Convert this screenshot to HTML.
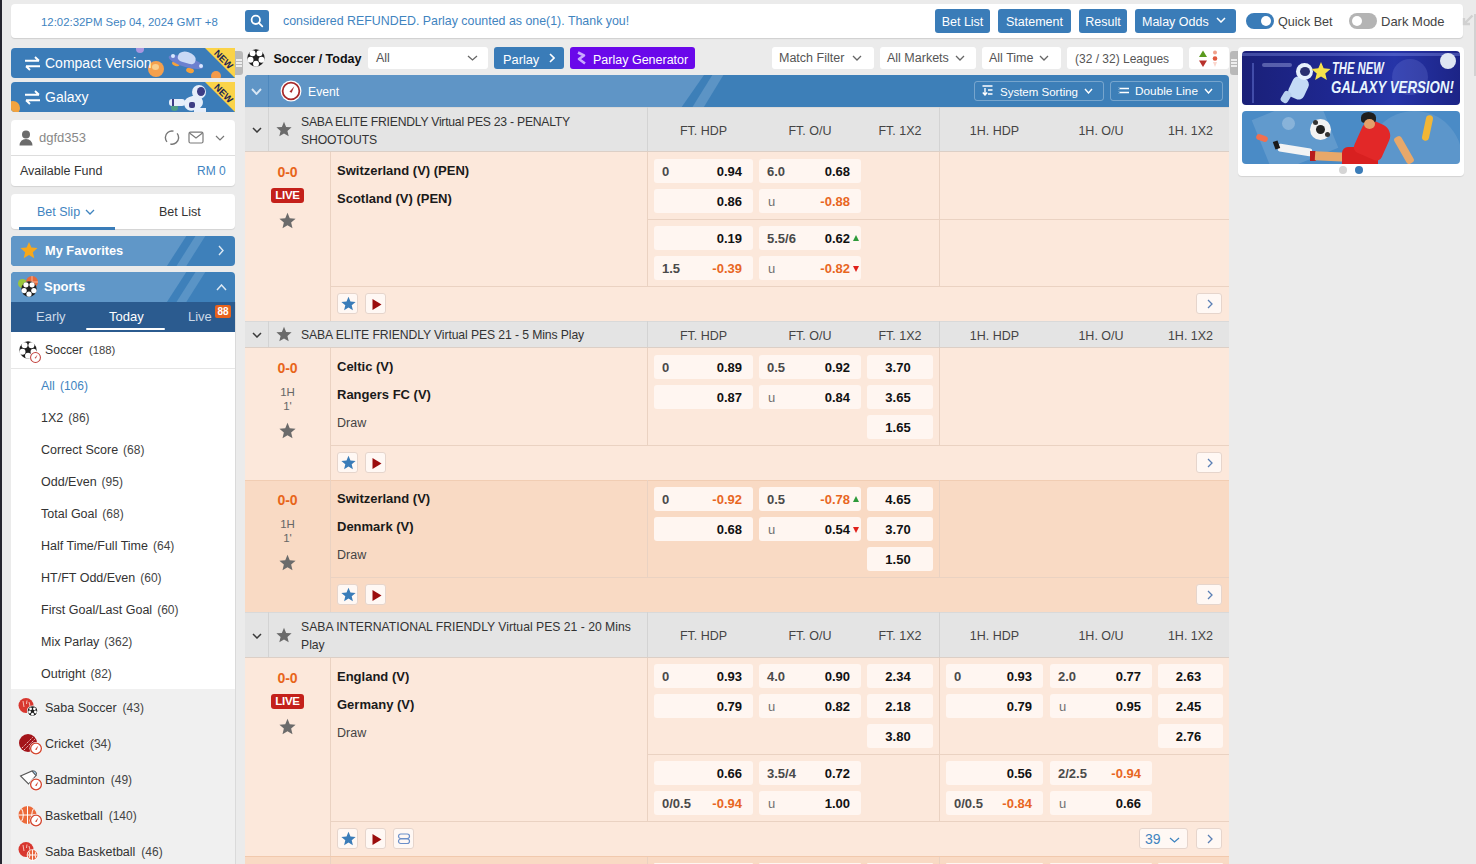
<!DOCTYPE html><html><head><meta charset="utf-8"><style>
*{margin:0;padding:0;box-sizing:border-box}
html,body{width:1476px;height:864px;overflow:hidden;background:#ebebeb;font-family:"Liberation Sans",sans-serif;color:#333}
div,span,svg{position:absolute}
.t{white-space:nowrap;line-height:16px;font-size:13px}
.in{position:static}
.btn{background:#3a7cb8;border-radius:3px;color:#fff;font-size:13px;line-height:27px;text-align:center}
.wh{background:#fff;border-radius:4px}
.ob{background:#fff6f1;border-radius:3px;height:24px}
.ob .h{left:8px;top:4.5px;font-size:13px;line-height:16px;color:#4a4a4a;font-weight:bold;white-space:nowrap}
.ob .u{left:9px;top:4.5px;font-size:13px;line-height:16px;color:#707070;white-space:nowrap}
.ob .o{right:11px;top:4.5px;font-size:13px;line-height:16px;font-weight:bold;color:#111;white-space:nowrap}
.ob .c{left:0;right:4px;top:4.5px;font-size:13px;line-height:16px;font-weight:bold;color:#111;text-align:center}
.ob .n{color:#e8661f}
.lg{background:#e4e4e4}
.colh{font-size:12.5px;color:#444;line-height:16px;white-space:nowrap;text-align:center}
.fb{background:#fff8f4;border:1px solid #e6d5cc;border-radius:3px;width:21px;height:21px}
</style></head><body><div style="left:0;top:0;width:2px;height:864px;background:#25252f"></div>
<div style="left:11px;top:4px;width:1452px;height:34px;background:#fff;border-radius:4px;box-shadow:0 1px 1px rgba(0,0,0,.12)"></div>
<div class="t" style="left:41px;top:14px;font-size:11.4px;color:#3f84bf;line-height:16px">12:02:32PM Sep 04, 2024 GMT +8</div>
<div style="left:245px;top:10px;width:24px;height:22px;background:#3a7cb8;border-radius:3px"><svg style="left:5px;top:4px" width="14" height="14" viewBox="0 0 14 14"><circle cx="5.8" cy="5.8" r="4.2" fill="none" stroke="#fff" stroke-width="1.8"/><path d="M8.8 8.8 L12.3 12.3" stroke="#fff" stroke-width="1.8" stroke-linecap="round"/></svg></div>
<div class="t" style="left:283px;top:13px;font-size:12.4px;color:#3f84bf">considered REFUNDED. Parlay counted as one(1). Thank you!</div>
<div class="btn" style="left:935px;top:9px;width:55px;height:24px;font-size:12.5px;line-height:27px">Bet List</div>
<div class="btn" style="left:998px;top:9px;width:73px;height:24px;font-size:12.5px;line-height:27px">Statement</div>
<div class="btn" style="left:1079px;top:9px;width:48px;height:24px;font-size:12.5px;line-height:27px">Result</div>
<div class="btn" style="left:1135px;top:9px;width:101px;height:24px;font-size:12.5px;line-height:27px;text-align:left;padding-left:7px"><span class="in">Malay Odds</span></div>
<svg style="left:1216px;top:17px" width="10" height="6" viewBox="0 0 10 6"><path d="M1 1 L5.0 5 L9 1" fill="none" stroke="#fff" stroke-width="1.5"/></svg>
<div style="left:1246px;top:13px;width:28px;height:16px;background:#3a7cb8;border-radius:8px"><div style="left:15px;top:3px;width:10px;height:10px;border-radius:5px;background:#fff"></div></div>
<div class="t" style="left:1278px;top:14px;font-size:12.6px;color:#444">Quick Bet</div>
<div style="left:1349px;top:13px;width:28px;height:16px;background:#b4b4b4;border-radius:8px"><div style="left:3px;top:3px;width:10px;height:10px;border-radius:5px;background:#fff"></div></div>
<div class="t" style="left:1381px;top:14px;font-size:13px;color:#444">Dark Mode</div>
<svg style="left:1462px;top:14px" width="12" height="12" viewBox="0 0 12 12"><path d="M10.5 1.5 L2.5 9.5 M2 4 L2 10 L8 10" fill="none" stroke="#d0d0d0" stroke-width="2.4"/></svg>
<div style="left:1474px;top:14px;width:2px;height:62px;background:#d2d2d2"></div>
<div style="left:11px;top:48px;width:224px;height:30px;background:#3b7cb8;border-radius:4px 0 0 4px;overflow:hidden"><svg style="left:13px;top:8px" width="17" height="15" viewBox="0 0 17 15"><path d="M1 4.8 H15 M11 1 L15 4.8 M16 10.2 H2 M6 14 L2 10.2" fill="none" stroke="#fff" stroke-width="1.9"/></svg><div style="left:125px;top:-3px;width:8px;height:8px;border-radius:50%;background:#a996e0"></div><div style="left:137px;top:13px;width:16px;height:16px;border-radius:50%;background:#f5a04d"></div><div style="left:141px;top:16px;width:7px;height:6px;border-radius:50%;background:#f9cf8f"></div><div style="left:161px;top:13px;width:8px;height:5px;border-radius:50%;background:#f7a23a;transform:rotate(15deg)"></div><div style="left:175px;top:20px;width:8px;height:5px;border-radius:50%;background:#f7a23a;transform:rotate(15deg)"></div><div style="left:157px;top:9px;width:36px;height:10px;border-radius:50%;background:#6b80cf;transform:rotate(17deg)"></div><div style="left:167px;top:4px;width:18px;height:11px;border-radius:50% 50% 30% 30%;background:#cad9f5;transform:rotate(17deg)"></div><div style="left:160px;top:6px;width:4px;height:4px;border-radius:50%;background:#d8e8ff"></div><div style="left:188px;top:16px;width:4px;height:4px;border-radius:50%;background:#d8e8ff"></div><div style="left:200px;top:23px;width:10px;height:10px;border-radius:50%;background:#f39a4a"></div><div class="t" style="left:34px;top:7px;font-size:14px;color:#fff">Compact Version</div><svg style="left:194px;top:0" width="30" height="30" viewBox="0 0 30 30"><polygon points="0,0 30,0 30,30" fill="#fbd348"/><text x="18.8" y="11.2" transform="rotate(45 18.8 11.2)" text-anchor="middle" dominant-baseline="central" font-family="Liberation Sans" font-weight="bold" font-size="9.5" fill="#1d2552">NEW</text></svg></div>
<div style="left:11px;top:82px;width:224px;height:30px;background:#3b7cb8;border-radius:4px 0 0 4px;overflow:hidden"><svg style="left:13px;top:8px" width="17" height="15" viewBox="0 0 17 15"><path d="M1 4.8 H15 M11 1 L15 4.8 M16 10.2 H2 M6 14 L2 10.2" fill="none" stroke="#fff" stroke-width="1.9"/></svg><div style="left:-5px;top:19px;width:14px;height:14px;border-radius:50%;background:#f2a33f"></div><div style="left:160px;top:22px;width:7px;height:7px;border-radius:50%;background:#4f9f86"></div><div style="left:173px;top:14px;width:19px;height:14px;border-radius:7px;background:#e6eefa;transform:rotate(-15deg)"></div><div style="left:158px;top:17px;width:16px;height:7px;border-radius:3px;background:#e6eefa"></div><div style="left:161px;top:17px;width:2px;height:7px;background:#3d3d85"></div><div style="left:181px;top:3px;width:14px;height:14px;border-radius:50%;background:#e6eefa"></div><div style="left:186px;top:5px;width:8px;height:9px;border-radius:50%;background:#3d3d85"></div><div style="left:178px;top:20px;width:6px;height:6px;border-radius:2px;background:#3d3d85"></div><div style="left:183px;top:26px;width:12px;height:6px;background:#e6eefa"></div><div class="t" style="left:34px;top:7px;font-size:14px;color:#fff">Galaxy</div><svg style="left:194px;top:0" width="30" height="30" viewBox="0 0 30 30"><polygon points="0,0 30,0 30,30" fill="#fbd348"/><text x="18.8" y="11.2" transform="rotate(45 18.8 11.2)" text-anchor="middle" dominant-baseline="central" font-family="Liberation Sans" font-weight="bold" font-size="9.5" fill="#1d2552">NEW</text></svg></div>
<div style="left:235px;top:51px;width:8px;height:24px;background:#b9b9b9;border-radius:0 3px 3px 0"><div style="left:1px;top:8px;width:6px;height:1.5px;background:#eee"></div><div style="left:1px;top:11px;width:6px;height:1.5px;background:#eee"></div><div style="left:1px;top:14px;width:6px;height:1.5px;background:#eee"></div></div>
<div style="left:11px;top:120px;width:224px;height:66px;background:#fff;border-radius:4px;box-shadow:0 1px 1px rgba(0,0,0,.1)"></div>
<svg style="left:19px;top:130px" width="14" height="16" viewBox="0 0 14 16"><circle cx="7" cy="4.5" r="4" fill="#6b6b6b"/><path d="M0.5 15.5 Q1 9 7 9 Q13 9 13.5 15.5 Z" fill="#6b6b6b"/></svg>
<div class="t" style="left:39px;top:130px;font-size:13px;color:#888">dgfd353</div>
<svg style="left:164px;top:130px" width="16" height="16" viewBox="0 0 16 16"><circle cx="8" cy="7.6" r="6.6" fill="none" stroke="#777" stroke-width="1.4" stroke-dasharray="16.4 4.3" transform="rotate(-220 8 7.6)"/></svg>
<svg style="left:188px;top:131px" width="16" height="13" viewBox="0 0 16 13"><rect x="1" y="1.2" width="14" height="10.8" rx="1.5" fill="none" stroke="#7a7a7a" stroke-width="1.2"/><path d="M1.5 2 L8 7 L14.5 2" fill="none" stroke="#7a7a7a" stroke-width="1.2"/></svg>
<svg style="left:215px;top:135px" width="10" height="6" viewBox="0 0 10 6"><path d="M1 1 L5.0 5 L9 1" fill="none" stroke="#777" stroke-width="1.2"/></svg>
<div style="left:11px;top:155px;width:224px;height:1px;background:#ddd"></div>
<div class="t" style="left:20px;top:163px;font-size:12.5px;color:#333">Available Fund</div>
<div class="t" style="left:197px;top:163px;font-size:12px;color:#3f84bf">RM 0</div>
<div style="left:11px;top:194px;width:224px;height:35px;background:#fff;border-radius:4px;box-shadow:0 1px 1px rgba(0,0,0,.1)"></div>
<div class="t" style="left:37px;top:204px;font-size:12.5px;color:#3f84bf">Bet Slip</div>
<svg style="left:85px;top:209px" width="10" height="6" viewBox="0 0 10 6"><path d="M1 1 L5.0 5 L9 1" fill="none" stroke="#3f84bf" stroke-width="1.3"/></svg>
<div class="t" style="left:159px;top:204px;font-size:12.5px;color:#333">Bet List</div>
<div style="left:19px;top:227px;width:96px;height:3px;background:#3a7cb8"></div>
<div style="left:11px;top:236px;width:224px;height:30px;border-radius:4px;overflow:hidden;background:#3e80ba"><svg style="left:0;top:0" width="224" height="30" viewBox="0 0 224 30"><polygon points="0,0 175.3,0 155.9,30 0,30" fill="#6097c8"/><polygon points="184.5,0 194.3,0 175.3,30 165.5,30" fill="#5a94c6"/></svg></div>
<svg style="left:20px;top:241px" width="18" height="18" viewBox="0 0 18 18"><polygon points="9.00,0.90 11.38,6.62 17.56,7.12 12.85,11.15 14.29,17.18 9.00,13.95 3.71,17.18 5.15,11.15 0.44,7.12 6.62,6.62" fill="#f7a81b"/></svg>
<div class="t" style="left:45px;top:243px;font-size:12.8px;font-weight:bold;color:#fff">My Favorites</div>
<svg style="left:218px;top:245px" width="6" height="11" viewBox="0 0 6 11"><path d="M1 1 L5 5.5 L1 10" fill="none" stroke="#dce8f3" stroke-width="1.4"/></svg>
<div style="left:11px;top:272px;width:224px;height:30px;border-radius:4px 4px 0 0;overflow:hidden;background:#3e80ba"><svg style="left:0;top:0" width="224" height="30" viewBox="0 0 224 30"><polygon points="0,0 175.3,0 155.9,30 0,30" fill="#6097c8"/><polygon points="184.5,0 194.3,0 175.3,30 165.5,30" fill="#5a94c6"/></svg></div>
<div style="left:18px;top:279px;width:9px;height:9px;border-radius:50%;background:#9bc53d"></div>
<svg style="left:26px;top:276px" width="12" height="12" viewBox="0 0 12 12"><circle cx="6" cy="6" r="6" fill="#e66a3b"/><path d="M0 6 H12 M6 0 V12" stroke="#f7c0a8" stroke-width="0.9"/></svg>
<svg style="left:21px;top:281px" width="16" height="16" viewBox="0 0 20 20"><circle cx="10" cy="10" r="9.6" fill="#1f1f1f"/><circle cx="6.2" cy="4.8" r="3.3" fill="#fff"/><circle cx="13.8" cy="4.8" r="3.3" fill="#fff"/><circle cx="16.1" cy="11.9" r="3.3" fill="#fff"/><circle cx="3.9" cy="11.9" r="3.3" fill="#fff"/><circle cx="10" cy="16.3" r="3.3" fill="#fff"/></svg>
<div class="t" style="left:44px;top:279px;font-size:13px;font-weight:bold;color:#fff">Sports</div>
<svg style="left:216px;top:284px" width="11" height="7" viewBox="0 0 11 7"><path d="M1 6 L5.5 1 L10 6" fill="none" stroke="#dce8f3" stroke-width="1.5"/></svg>
<div style="left:11px;top:302px;width:224px;height:30px;background:#2b5b8f"></div>
<div class="t" style="left:36px;top:309px;font-size:13px;color:#cbd9e8">Early</div>
<div class="t" style="left:109px;top:309px;font-size:13px;color:#fff">Today</div>
<div style="left:86px;top:328px;width:79px;height:2px;background:#fff;border-radius:1px"></div>
<div class="t" style="left:188px;top:309px;font-size:13px;color:#cbd9e8">Live</div>
<div style="left:215px;top:305px;width:16px;height:13px;background:#e8621c;border-radius:2px"><div class="t" style="left:0;width:16px;top:0;line-height:13px;font-size:10px;font-weight:bold;color:#fff;text-align:center">88</div></div>
<div style="left:11px;top:332px;width:224px;height:357px;background:#fff"></div>
<svg style="left:19px;top:341px" width="18" height="18" viewBox="0 0 20 20"><circle cx="10" cy="10" r="9.6" fill="#1f1f1f"/><circle cx="6.2" cy="4.8" r="3.3" fill="#fff"/><circle cx="13.8" cy="4.8" r="3.3" fill="#fff"/><circle cx="16.1" cy="11.9" r="3.3" fill="#fff"/><circle cx="3.9" cy="11.9" r="3.3" fill="#fff"/><circle cx="10" cy="16.3" r="3.3" fill="#fff"/></svg>
<svg style="left:29px;top:351px" width="13" height="13" viewBox="0 0 20 20"><circle cx="10" cy="10" r="9.5" fill="#fff"/><circle cx="10" cy="10" r="7.6" fill="none" stroke="#c2413c" stroke-width="1.6"/><path d="M8.6 10.6 L13 5.6 L10.6 11.6 Z" fill="#c2413c"/></svg>
<div class="t" style="left:45px;top:342px;font-size:12.2px;color:#333">Soccer</div><div class="t" style="left:89px;top:342px;font-size:11.3px;color:#444">(188)</div>
<div style="left:11px;top:368px;width:224px;height:1px;background:#e6e6e6"></div>
<div class="t" style="left:41px;top:377.67px;font-size:12.5px;line-height:16px;color:#3f84bf"><span class="in">All</span><span class="in" style="margin-left:5px;font-size:12px;color:#3f84bf">(106)</span></div>
<div class="t" style="left:41px;top:409.67px;font-size:12.5px;line-height:16px;color:#333"><span class="in">1X2</span><span class="in" style="margin-left:5px;font-size:12px;color:#444">(86)</span></div>
<div class="t" style="left:41px;top:441.67px;font-size:12.5px;line-height:16px;color:#333"><span class="in">Correct Score</span><span class="in" style="margin-left:5px;font-size:12px;color:#444">(68)</span></div>
<div class="t" style="left:41px;top:473.67px;font-size:12.5px;line-height:16px;color:#333"><span class="in">Odd/Even</span><span class="in" style="margin-left:5px;font-size:12px;color:#444">(95)</span></div>
<div class="t" style="left:41px;top:505.67px;font-size:12.5px;line-height:16px;color:#333"><span class="in">Total Goal</span><span class="in" style="margin-left:5px;font-size:12px;color:#444">(68)</span></div>
<div class="t" style="left:41px;top:537.67px;font-size:12.5px;line-height:16px;color:#333"><span class="in">Half Time/Full Time</span><span class="in" style="margin-left:5px;font-size:12px;color:#444">(64)</span></div>
<div class="t" style="left:41px;top:569.67px;font-size:12.5px;line-height:16px;color:#333"><span class="in">HT/FT Odd/Even</span><span class="in" style="margin-left:5px;font-size:12px;color:#444">(60)</span></div>
<div class="t" style="left:41px;top:601.67px;font-size:12.5px;line-height:16px;color:#333"><span class="in">First Goal/Last Goal</span><span class="in" style="margin-left:5px;font-size:12px;color:#444">(60)</span></div>
<div class="t" style="left:41px;top:633.67px;font-size:12.5px;line-height:16px;color:#333"><span class="in">Mix Parlay</span><span class="in" style="margin-left:5px;font-size:12px;color:#444">(362)</span></div>
<div class="t" style="left:41px;top:665.67px;font-size:12.5px;line-height:16px;color:#333"><span class="in">Outright</span><span class="in" style="margin-left:5px;font-size:12px;color:#444">(82)</span></div>
<div style="left:11px;top:689px;width:224px;height:175px;background:#f0f0f0"></div>
<svg style="left:18px;top:698px" width="22" height="20" viewBox="0 0 22 20"><circle cx="8" cy="7.5" r="7.5" fill="#d8372f"/><path d="M5 3 L6 9 M9 2.5 L8.5 6 M11 4 L12 8" stroke="#f4c0b8" stroke-width="1"/><circle cx="14.5" cy="13" r="5.6" fill="#fff"/><circle cx="14.5" cy="13" r="4.8" fill="#1f1f1f"/><circle cx="12.6" cy="10.8" r="1.4" fill="#fff"/><circle cx="16.4" cy="10.8" r="1.4" fill="#fff"/><circle cx="17.4" cy="14" r="1.4" fill="#fff"/><circle cx="11.6" cy="14" r="1.4" fill="#fff"/><circle cx="14.5" cy="16.2" r="1.4" fill="#fff"/></svg>
<div class="t" style="left:45px;top:699.67px;font-size:12.5px;line-height:16px;color:#333"><span class="in">Saba Soccer</span><span class="in" style="margin-left:6px;font-size:12px;color:#444">(43)</span></div>
<svg style="left:18px;top:733px" width="26" height="22" viewBox="0 0 26 22"><circle cx="10" cy="10" r="9" fill="#a3141a"/><path d="M4 15 L15 4 M6 17 L17 6" stroke="#f3d0d0" stroke-width="1" stroke-dasharray="1.3 1"/><circle cx="18" cy="15.5" r="6.5" fill="#fff"/><circle cx="18" cy="15.5" r="5.4" fill="none" stroke="#d2452e" stroke-width="1.3"/><path d="M17 16.4 L20.4 12.6 L18.6 17 Z" fill="#d2452e"/></svg>
<div class="t" style="left:45px;top:735.67px;font-size:12.5px;line-height:16px;color:#333"><span class="in">Cricket</span><span class="in" style="margin-left:6px;font-size:12px;color:#444">(34)</span></div>
<svg style="left:18px;top:769px" width="26" height="22" viewBox="0 0 26 22"><path d="M2.5 7 L14 2 L18 6.5 L10.5 15 Z" fill="#fff" stroke="#555" stroke-width="1.1"/><path d="M14 2 Q17 1 18.5 4 L18 6.5 Z" fill="#9cc8ea" stroke="#555" stroke-width="1"/><circle cx="18" cy="15.5" r="6.5" fill="#fff"/><circle cx="18" cy="15.5" r="5.4" fill="none" stroke="#d2452e" stroke-width="1.3"/><path d="M17 16.4 L20.4 12.6 L18.6 17 Z" fill="#d2452e"/></svg>
<div class="t" style="left:45px;top:771.67px;font-size:12.5px;line-height:16px;color:#333"><span class="in">Badminton</span><span class="in" style="margin-left:6px;font-size:12px;color:#444">(49)</span></div>
<svg style="left:18px;top:805px" width="26" height="22" viewBox="0 0 26 22"><circle cx="9.5" cy="10" r="9" fill="#ec6a3a"/><path d="M0.5 10 H18.5 M9.5 1 V19 M3.5 3.5 Q7 10 3.5 16.5 M15.5 3.5 Q12 10 15.5 16.5" stroke="#fff" stroke-width="1" fill="none"/><circle cx="18" cy="15.5" r="6.5" fill="#fff"/><circle cx="18" cy="15.5" r="5.4" fill="none" stroke="#d2452e" stroke-width="1.3"/><path d="M17 16.4 L20.4 12.6 L18.6 17 Z" fill="#d2452e"/></svg>
<div class="t" style="left:45px;top:807.67px;font-size:12.5px;line-height:16px;color:#333"><span class="in">Basketball</span><span class="in" style="margin-left:6px;font-size:12px;color:#444">(140)</span></div>
<svg style="left:18px;top:842px" width="22" height="20" viewBox="0 0 22 20"><circle cx="8" cy="7.5" r="7.5" fill="#d8372f"/><path d="M5 3 L6 9 M9 2.5 L8.5 6 M11 4 L12 8" stroke="#f4c0b8" stroke-width="1"/><circle cx="14.5" cy="13" r="5.8" fill="#fff"/><circle cx="14.5" cy="13" r="5" fill="#e8643c"/><path d="M9.5 13 H19.5 M14.5 8 V18 M11 9.5 Q13 13 11 16.5 M18 9.5 Q16 13 18 16.5" stroke="#fff" stroke-width="0.9" fill="none"/></svg>
<div class="t" style="left:45px;top:843.67px;font-size:12.5px;line-height:16px;color:#333"><span class="in">Saba Basketball</span><span class="in" style="margin-left:6px;font-size:12px;color:#444">(46)</span></div>
<div style="left:235px;top:302px;width:1px;height:562px;background:#dadada"></div>
<div style="left:1230px;top:51px;width:8px;height:24px;background:#b9b9b9;border-radius:3px 0 0 3px"><div style="left:1px;top:8px;width:6px;height:1.5px;background:#eee"></div><div style="left:1px;top:11px;width:6px;height:1.5px;background:#eee"></div><div style="left:1px;top:14px;width:6px;height:1.5px;background:#eee"></div></div>
<svg style="left:247px;top:49px" width="18" height="18" viewBox="0 0 20 20"><circle cx="10" cy="10" r="9.6" fill="#1f1f1f"/><circle cx="6.2" cy="4.8" r="3.3" fill="#fff"/><circle cx="13.8" cy="4.8" r="3.3" fill="#fff"/><circle cx="16.1" cy="11.9" r="3.3" fill="#fff"/><circle cx="3.9" cy="11.9" r="3.3" fill="#fff"/><circle cx="10" cy="16.3" r="3.3" fill="#fff"/></svg>
<div class="t" style="left:273.5px;top:50.97px;font-size:12.5px;line-height:16px;font-weight:bold;color:#111">Soccer / Today</div>
<div style="left:368px;top:47px;width:120px;height:22px;background:#fff;border-radius:3px"></div>
<div class="t" style="left:376px;top:50.17px;font-size:12.5px;line-height:16px;color:#555">All</div>
<svg style="left:467px;top:55px" width="11" height="6" viewBox="0 0 11 6"><path d="M1 1 L5.5 5 L10 1" fill="none" stroke="#666" stroke-width="1.3"/></svg>
<div style="left:494px;top:47px;width:70px;height:22px;background:#3a7cb8;border-radius:3px"></div>
<div class="t" style="left:503px;top:51.86px;font-size:12.8px;line-height:16px;color:#fff">Parlay</div>
<svg style="left:549px;top:53px" width="6" height="10" viewBox="0 0 6 10"><path d="M1 1 L5 5.0 L1 9" fill="none" stroke="#fff" stroke-width="1.6"/></svg>
<div style="left:570px;top:47px;width:125px;height:22px;background:#6a08ea;border-radius:3px"></div>
<svg style="left:576px;top:51px" width="11" height="14" viewBox="0 0 11 14"><path d="M2 1.5 L8 4.5 L3 8 L9 12.5" fill="none" stroke="#c9a8ff" stroke-width="2.6" stroke-linejoin="round"/></svg>
<div class="t" style="left:593px;top:51.97px;font-size:12.5px;line-height:16px;color:#fff">Parlay Generator</div>
<div style="left:772px;top:47px;width:102px;height:22px;background:#fff;border-radius:3px"></div>
<div class="t" style="left:779px;top:50.17px;font-size:12.5px;line-height:16px;color:#555">Match Filter</div>
<svg style="left:852px;top:55px" width="10" height="6" viewBox="0 0 10 6"><path d="M1 1 L5.0 5 L9 1" fill="none" stroke="#666" stroke-width="1.3"/></svg>
<div style="left:880px;top:47px;width:96px;height:22px;background:#fff;border-radius:3px"></div>
<div class="t" style="left:887px;top:50.17px;font-size:12.5px;line-height:16px;color:#555">All Markets</div>
<svg style="left:955px;top:55px" width="10" height="6" viewBox="0 0 10 6"><path d="M1 1 L5.0 5 L9 1" fill="none" stroke="#666" stroke-width="1.3"/></svg>
<div style="left:982px;top:47px;width:79px;height:22px;background:#fff;border-radius:3px"></div>
<div class="t" style="left:989px;top:50.17px;font-size:12.5px;line-height:16px;color:#555">All Time</div>
<svg style="left:1039px;top:55px" width="10" height="6" viewBox="0 0 10 6"><path d="M1 1 L5.0 5 L9 1" fill="none" stroke="#666" stroke-width="1.3"/></svg>
<div style="left:1067px;top:47px;width:116px;height:22px;background:#fff;border-radius:3px"></div>
<div class="t" style="left:1075px;top:50.84px;font-size:12px;line-height:16px;color:#555">(32 / 32) Leagues</div>
<div style="left:1189px;top:47px;width:40px;height:22px;background:#fff;border-radius:3px"></div>
<svg style="left:1199px;top:50px" width="22" height="18" viewBox="0 0 22 18"><polygon points="4,0.5 8,7 0,7" fill="#5a9a1e"/><polygon points="0,10.5 8,10.5 4,17" fill="#b8322c"/><circle cx="16" cy="2.5" r="2" fill="#f0a08a"/><circle cx="16" cy="8.5" r="2.3" fill="#e0583e"/><polygon points="14,12 18,12 16,17" fill="#fbd6cc"/></svg>
<div style="left:245px;top:75px;width:984px;height:32px;border-radius:4px 4px 0 0;overflow:hidden;background:#3d7fb8"><svg style="left:0;top:0" width="984" height="32" viewBox="0 0 984 32"><polygon points="0,0 459,0 436.7,32 0,32" fill="#5f95c6"/><polygon points="467.3,0 478.4,0 458.9,32 447.5,32" fill="#5c94c5"/></svg></div>
<div style="left:268px;top:75px;width:1px;height:32px;background:#4e88bd"></div>
<svg style="left:251px;top:88px" width="11" height="7" viewBox="0 0 11 7"><path d="M1 1 L5.5 6 L10 1" fill="none" stroke="#d8e6f3" stroke-width="1.9"/></svg>
<svg style="left:280px;top:80px" width="22" height="22" viewBox="0 0 20 20"><circle cx="10" cy="10" r="9.5" fill="#fff"/><circle cx="10" cy="10" r="7.6" fill="none" stroke="#a82a2a" stroke-width="1.6"/><path d="M8.6 10.6 L13 5.6 L10.6 11.6 Z" fill="#a82a2a"/></svg>
<div class="t" style="left:308px;top:83.77px;font-size:12.2px;line-height:16px;color:#fff">Event</div>
<div style="left:974px;top:81px;width:130px;height:20px;border:1px solid rgba(255,255,255,.3);border-radius:3px"></div>
<svg style="left:982px;top:85px" width="11" height="11" viewBox="0 0 11 11"><path d="M0.5 1 H10.5 M3 3 V10 M0.8 7.5 L3 10 L5.2 7.5 M6 5 H10.5 M6 9 H10.5" fill="none" stroke="#fff" stroke-width="1.4"/></svg>
<div class="t" style="left:1000px;top:83.52px;font-size:11.5px;line-height:16px;color:#fff">System Sorting</div>
<svg style="left:1084px;top:88px" width="9" height="6" viewBox="0 0 9 6"><path d="M1 1 L4.5 5 L8 1" fill="none" stroke="#fff" stroke-width="1.4"/></svg>
<div style="left:1110px;top:81px;width:113px;height:20px;border:1px solid rgba(255,255,255,.3);border-radius:3px"></div>
<svg style="left:1118px;top:87px" width="11" height="8" viewBox="0 0 11 8"><path d="M0 1.5 H11 M0 5.5 H11" fill="none" stroke="#fff" stroke-width="1.5"/><path d="M0 1.5 H1.5 M0 5.5 H1.5" stroke="#3d7fb8" stroke-width="1.5"/></svg>
<div class="t" style="left:1135px;top:83.41px;font-size:11.8px;line-height:16px;color:#fff">Double Line</div>
<svg style="left:1204px;top:88px" width="9" height="6" viewBox="0 0 9 6"><path d="M1 1 L4.5 5 L8 1" fill="none" stroke="#fff" stroke-width="1.4"/></svg>
<div style="left:245px;top:107px;width:984px;height:45px;background:#e4e4e4"></div><div style="left:245px;top:107px;width:984px;height:1px;background:#d9d9d9"></div><div style="left:268px;top:107px;width:1px;height:45px;background:#d3d3d3"></div><div style="left:647px;top:107px;width:1px;height:45px;background:#d3d3d3"></div><div style="left:939px;top:107px;width:1px;height:45px;background:#d3d3d3"></div><svg style="left:251.5px;top:127.0px" width="10" height="6" viewBox="0 0 10 6"><path d="M1 1 L5.0 5 L9 1" fill="none" stroke="#3a3a3a" stroke-width="1.5"/></svg><svg style="left:276px;top:121.0px" width="16" height="16" viewBox="0 0 16 16"><polygon points="8.00,0.80 10.12,5.89 15.61,6.33 11.42,9.91 12.70,15.27 8.00,12.40 3.30,15.27 4.58,9.91 0.39,6.33 5.88,5.89" fill="#6b6b6b"/></svg><div style="left:245px;top:151px;width:984px;height:1px;background:#dccfc6"></div><div class="t" style="left:301px;top:113.57px;font-size:12.2px;line-height:16px;color:#333;letter-spacing:-0.24px">SABA ELITE FRIENDLY Virtual PES 23 - PENALTY</div><div class="t" style="left:301px;top:131.57px;font-size:12.2px;line-height:16px;color:#333;letter-spacing:-0.1px">SHOOTOUTS</div><div class="t colh" style="left:653.5px;width:100px;top:122.5px">FT. HDP</div><div class="t colh" style="left:760.0px;width:100px;top:122.5px">FT. O/U</div><div class="t colh" style="left:850.0px;width:100px;top:122.5px">FT. 1X2</div><div class="t colh" style="left:944.5px;width:100px;top:122.5px">1H. HDP</div><div class="t colh" style="left:1051.0px;width:100px;top:122.5px">1H. O/U</div><div class="t colh" style="left:1140.5px;width:100px;top:122.5px">1H. 1X2</div>
<div style="left:245px;top:152px;width:984px;height:169px;background:#fce8db"></div><div style="left:330px;top:152px;width:1px;height:169px;background:#ead2c2"></div><div style="left:647px;top:152px;width:1px;height:134px;background:#ead2c2"></div><div style="left:939px;top:152px;width:1px;height:134px;background:#ead2c2"></div><div style="left:647px;top:219px;width:582px;height:1px;background:#ead2c2"></div><div style="left:330px;top:286px;width:899px;height:1px;background:#ead2c2"></div><div class="t" style="left:257.5px;top:164.15px;font-size:14px;line-height:16px;font-weight:bold;color:#e8651a;width:60px"><div class="in" style="width:60px;text-align:center">0-0</div></div><div style="left:271.0px;top:188px;width:33px;height:15px;background:#c4201a;border-radius:3px"><div class="t" style="left:0;width:33px;top:0;line-height:15px;font-size:11.5px;font-weight:bold;color:#fff;text-align:center;letter-spacing:-0.3px">LIVE</div></div><svg style="left:279px;top:212px" width="17" height="17" viewBox="0 0 17 17"><polygon points="8.50,0.85 10.75,6.26 16.58,6.72 12.14,10.53 13.50,16.23 8.50,13.18 3.50,16.23 4.86,10.53 0.42,6.72 6.25,6.26" fill="#6b6b6b"/></svg><div class="t" style="left:337px;top:162.50px;font-size:13px;line-height:16px;font-weight:bold;color:#1a1a1a">Switzerland (V) (PEN)</div><div class="t" style="left:337px;top:190.50px;font-size:13px;line-height:16px;font-weight:bold;color:#1a1a1a">Scotland (V) (PEN)</div><div class="ob" style="left:654px;top:159px;width:99px"><div class="h">0</div><div class="o">0.94</div></div><div class="ob" style="left:759px;top:159px;width:102px"><div class="h">6.0</div><div class="o">0.68</div></div><div class="ob" style="left:654px;top:189px;width:99px"><div class="o">0.86</div></div><div class="ob" style="left:759px;top:189px;width:102px"><div class="u">u</div><div class="o n">-0.88</div></div><div class="ob" style="left:654px;top:226px;width:99px"><div class="o">0.19</div></div><div class="ob" style="left:759px;top:226px;width:102px"><div class="h">5.5/6</div><div class="o">0.62</div><svg style="right:2px;top:9px" width="6" height="6" viewBox="0 0 6 6"><polygon points="3,0 6,6 0,6" fill="#2e9a3a"/></svg></div><div class="ob" style="left:654px;top:256px;width:99px"><div class="h">1.5</div><div class="o n">-0.39</div></div><div class="ob" style="left:759px;top:256px;width:102px"><div class="u">u</div><div class="o n">-0.82</div><svg style="right:2px;top:10px" width="6" height="6" viewBox="0 0 6 6"><polygon points="0,0 6,0 3,6" fill="#e0201a"/></svg></div><div class="fb" style="left:337px;top:293px"><svg style="left:3px;top:2px" width="15" height="15" viewBox="0 0 15 15"><polygon points="7.50,0.75 9.48,5.52 14.63,5.93 10.71,9.29 11.91,14.32 7.50,11.62 3.09,14.32 4.29,9.29 0.37,5.93 5.52,5.52" fill="#3a7cb8"/></svg></div><div class="fb" style="left:365px;top:293px"><svg style="left:6px;top:5px" width="10" height="11" viewBox="0 0 10 11"><polygon points="0.5,0 9.5,5.5 0.5,11" fill="#9b0d0d"/></svg></div><div class="fb" style="left:1196px;top:293px;width:26px"><svg style="left:10px;top:5px" width="6" height="10" viewBox="0 0 6 10"><path d="M1 1 L5 5.0 L1 9" fill="none" stroke="#5a7fb5" stroke-width="1.3"/></svg></div>
<div style="left:245px;top:321px;width:984px;height:27px;background:#e4e4e4"></div><div style="left:245px;top:321px;width:984px;height:1px;background:#d9d9d9"></div><div style="left:268px;top:321px;width:1px;height:27px;background:#d3d3d3"></div><div style="left:647px;top:321px;width:1px;height:27px;background:#d3d3d3"></div><div style="left:939px;top:321px;width:1px;height:27px;background:#d3d3d3"></div><svg style="left:251.5px;top:332.0px" width="10" height="6" viewBox="0 0 10 6"><path d="M1 1 L5.0 5 L9 1" fill="none" stroke="#3a3a3a" stroke-width="1.5"/></svg><svg style="left:276px;top:326.0px" width="16" height="16" viewBox="0 0 16 16"><polygon points="8.00,0.80 10.12,5.89 15.61,6.33 11.42,9.91 12.70,15.27 8.00,12.40 3.30,15.27 4.58,9.91 0.39,6.33 5.88,5.89" fill="#6b6b6b"/></svg><div style="left:245px;top:347px;width:984px;height:1px;background:#dccfc6"></div><div class="t" style="left:301px;top:327.27px;font-size:12.2px;line-height:16px;color:#333;letter-spacing:-0.1px">SABA ELITE FRIENDLY Virtual PES 21 - 5 Mins Play</div><div class="t colh" style="left:653.5px;width:100px;top:327.5px">FT. HDP</div><div class="t colh" style="left:760.0px;width:100px;top:327.5px">FT. O/U</div><div class="t colh" style="left:850.0px;width:100px;top:327.5px">FT. 1X2</div><div class="t colh" style="left:944.5px;width:100px;top:327.5px">1H. HDP</div><div class="t colh" style="left:1051.0px;width:100px;top:327.5px">1H. O/U</div><div class="t colh" style="left:1140.5px;width:100px;top:327.5px">1H. 1X2</div>
<div style="left:245px;top:348px;width:984px;height:132px;background:#fce8db"></div><div style="left:330px;top:348px;width:1px;height:132px;background:#ead2c2"></div><div style="left:647px;top:348px;width:1px;height:97px;background:#ead2c2"></div><div style="left:939px;top:348px;width:1px;height:97px;background:#ead2c2"></div><div style="left:330px;top:445px;width:899px;height:1px;background:#ead2c2"></div><div class="t" style="left:257.5px;top:360.15px;font-size:14px;line-height:16px;font-weight:bold;color:#e8651a;width:60px"><div class="in" style="width:60px;text-align:center">0-0</div></div><div class="t" style="left:257.5px;top:384.02px;font-size:11.5px;line-height:16px;color:#666;width:60px"><div class="in" style="width:60px;text-align:center">1H</div></div><div class="t" style="left:257.5px;top:398.02px;font-size:11.5px;line-height:16px;color:#666;width:60px"><div class="in" style="width:60px;text-align:center">1'</div></div><svg style="left:279px;top:422px" width="17" height="17" viewBox="0 0 17 17"><polygon points="8.50,0.85 10.75,6.26 16.58,6.72 12.14,10.53 13.50,16.23 8.50,13.18 3.50,16.23 4.86,10.53 0.42,6.72 6.25,6.26" fill="#6b6b6b"/></svg><div class="t" style="left:337px;top:358.50px;font-size:13px;line-height:16px;font-weight:bold;color:#1a1a1a">Celtic (V)</div><div class="t" style="left:337px;top:386.50px;font-size:13px;line-height:16px;font-weight:bold;color:#1a1a1a">Rangers FC (V)</div><div class="t" style="left:337px;top:414.67px;font-size:12.5px;line-height:16px;color:#444">Draw</div><div class="ob" style="left:654px;top:355px;width:99px"><div class="h">0</div><div class="o">0.89</div></div><div class="ob" style="left:759px;top:355px;width:102px"><div class="h">0.5</div><div class="o">0.92</div></div><div class="ob" style="left:867px;top:355px;width:66px"><div class="c">3.70</div></div><div class="ob" style="left:654px;top:385px;width:99px"><div class="o">0.87</div></div><div class="ob" style="left:759px;top:385px;width:102px"><div class="u">u</div><div class="o">0.84</div></div><div class="ob" style="left:867px;top:385px;width:66px"><div class="c">3.65</div></div><div class="ob" style="left:867px;top:415px;width:66px"><div class="c">1.65</div></div><div class="fb" style="left:337px;top:452px"><svg style="left:3px;top:2px" width="15" height="15" viewBox="0 0 15 15"><polygon points="7.50,0.75 9.48,5.52 14.63,5.93 10.71,9.29 11.91,14.32 7.50,11.62 3.09,14.32 4.29,9.29 0.37,5.93 5.52,5.52" fill="#3a7cb8"/></svg></div><div class="fb" style="left:365px;top:452px"><svg style="left:6px;top:5px" width="10" height="11" viewBox="0 0 10 11"><polygon points="0.5,0 9.5,5.5 0.5,11" fill="#9b0d0d"/></svg></div><div class="fb" style="left:1196px;top:452px;width:26px"><svg style="left:10px;top:5px" width="6" height="10" viewBox="0 0 6 10"><path d="M1 1 L5 5.0 L1 9" fill="none" stroke="#5a7fb5" stroke-width="1.3"/></svg></div>
<div style="left:245px;top:480px;width:984px;height:132px;background:#f9dac4"></div><div style="left:245px;top:480px;width:984px;height:1px;background:#f1cdb3"></div><div style="left:330px;top:480px;width:1px;height:132px;background:#ead2c2"></div><div style="left:647px;top:480px;width:1px;height:97px;background:#ead2c2"></div><div style="left:939px;top:480px;width:1px;height:97px;background:#ead2c2"></div><div style="left:330px;top:577px;width:899px;height:1px;background:#ead2c2"></div><div class="t" style="left:257.5px;top:492.15px;font-size:14px;line-height:16px;font-weight:bold;color:#e8651a;width:60px"><div class="in" style="width:60px;text-align:center">0-0</div></div><div class="t" style="left:257.5px;top:516.02px;font-size:11.5px;line-height:16px;color:#666;width:60px"><div class="in" style="width:60px;text-align:center">1H</div></div><div class="t" style="left:257.5px;top:530.02px;font-size:11.5px;line-height:16px;color:#666;width:60px"><div class="in" style="width:60px;text-align:center">1'</div></div><svg style="left:279px;top:554px" width="17" height="17" viewBox="0 0 17 17"><polygon points="8.50,0.85 10.75,6.26 16.58,6.72 12.14,10.53 13.50,16.23 8.50,13.18 3.50,16.23 4.86,10.53 0.42,6.72 6.25,6.26" fill="#6b6b6b"/></svg><div class="t" style="left:337px;top:490.50px;font-size:13px;line-height:16px;font-weight:bold;color:#1a1a1a">Switzerland (V)</div><div class="t" style="left:337px;top:518.50px;font-size:13px;line-height:16px;font-weight:bold;color:#1a1a1a">Denmark (V)</div><div class="t" style="left:337px;top:546.67px;font-size:12.5px;line-height:16px;color:#444">Draw</div><div class="ob" style="left:654px;top:487px;width:99px"><div class="h">0</div><div class="o n">-0.92</div></div><div class="ob" style="left:759px;top:487px;width:102px"><div class="h">0.5</div><div class="o n">-0.78</div><svg style="right:2px;top:9px" width="6" height="6" viewBox="0 0 6 6"><polygon points="3,0 6,6 0,6" fill="#2e9a3a"/></svg></div><div class="ob" style="left:867px;top:487px;width:66px"><div class="c">4.65</div></div><div class="ob" style="left:654px;top:517px;width:99px"><div class="o">0.68</div></div><div class="ob" style="left:759px;top:517px;width:102px"><div class="u">u</div><div class="o">0.54</div><svg style="right:2px;top:10px" width="6" height="6" viewBox="0 0 6 6"><polygon points="0,0 6,0 3,6" fill="#e0201a"/></svg></div><div class="ob" style="left:867px;top:517px;width:66px"><div class="c">3.70</div></div><div class="ob" style="left:867px;top:547px;width:66px"><div class="c">1.50</div></div><div class="fb" style="left:337px;top:584px"><svg style="left:3px;top:2px" width="15" height="15" viewBox="0 0 15 15"><polygon points="7.50,0.75 9.48,5.52 14.63,5.93 10.71,9.29 11.91,14.32 7.50,11.62 3.09,14.32 4.29,9.29 0.37,5.93 5.52,5.52" fill="#3a7cb8"/></svg></div><div class="fb" style="left:365px;top:584px"><svg style="left:6px;top:5px" width="10" height="11" viewBox="0 0 10 11"><polygon points="0.5,0 9.5,5.5 0.5,11" fill="#9b0d0d"/></svg></div><div class="fb" style="left:1196px;top:584px;width:26px"><svg style="left:10px;top:5px" width="6" height="10" viewBox="0 0 6 10"><path d="M1 1 L5 5.0 L1 9" fill="none" stroke="#5a7fb5" stroke-width="1.3"/></svg></div>
<div style="left:245px;top:612px;width:984px;height:46px;background:#e4e4e4"></div><div style="left:245px;top:612px;width:984px;height:1px;background:#d9d9d9"></div><div style="left:268px;top:612px;width:1px;height:46px;background:#d3d3d3"></div><div style="left:647px;top:612px;width:1px;height:46px;background:#d3d3d3"></div><div style="left:939px;top:612px;width:1px;height:46px;background:#d3d3d3"></div><svg style="left:251.5px;top:632.5px" width="10" height="6" viewBox="0 0 10 6"><path d="M1 1 L5.0 5 L9 1" fill="none" stroke="#3a3a3a" stroke-width="1.5"/></svg><svg style="left:276px;top:626.5px" width="16" height="16" viewBox="0 0 16 16"><polygon points="8.00,0.80 10.12,5.89 15.61,6.33 11.42,9.91 12.70,15.27 8.00,12.40 3.30,15.27 4.58,9.91 0.39,6.33 5.88,5.89" fill="#6b6b6b"/></svg><div style="left:245px;top:657px;width:984px;height:1px;background:#dccfc6"></div><div class="t" style="left:301px;top:619.07px;font-size:12.2px;line-height:16px;color:#333;letter-spacing:0px">SABA INTERNATIONAL FRIENDLY Virtual PES 21 - 20 Mins</div><div class="t" style="left:301px;top:637.07px;font-size:12.2px;line-height:16px;color:#333;letter-spacing:0px">Play</div><div class="t colh" style="left:653.5px;width:100px;top:628.0px">FT. HDP</div><div class="t colh" style="left:760.0px;width:100px;top:628.0px">FT. O/U</div><div class="t colh" style="left:850.0px;width:100px;top:628.0px">FT. 1X2</div><div class="t colh" style="left:944.5px;width:100px;top:628.0px">1H. HDP</div><div class="t colh" style="left:1051.0px;width:100px;top:628.0px">1H. O/U</div><div class="t colh" style="left:1140.5px;width:100px;top:628.0px">1H. 1X2</div>
<div style="left:245px;top:658px;width:984px;height:198px;background:#fce8db"></div><div style="left:330px;top:658px;width:1px;height:198px;background:#ead2c2"></div><div style="left:647px;top:658px;width:1px;height:163px;background:#ead2c2"></div><div style="left:939px;top:658px;width:1px;height:163px;background:#ead2c2"></div><div style="left:647px;top:754px;width:582px;height:1px;background:#ead2c2"></div><div style="left:330px;top:821px;width:899px;height:1px;background:#ead2c2"></div><div class="t" style="left:257.5px;top:670.15px;font-size:14px;line-height:16px;font-weight:bold;color:#e8651a;width:60px"><div class="in" style="width:60px;text-align:center">0-0</div></div><div style="left:271.0px;top:694px;width:33px;height:15px;background:#c4201a;border-radius:3px"><div class="t" style="left:0;width:33px;top:0;line-height:15px;font-size:11.5px;font-weight:bold;color:#fff;text-align:center;letter-spacing:-0.3px">LIVE</div></div><svg style="left:279px;top:718px" width="17" height="17" viewBox="0 0 17 17"><polygon points="8.50,0.85 10.75,6.26 16.58,6.72 12.14,10.53 13.50,16.23 8.50,13.18 3.50,16.23 4.86,10.53 0.42,6.72 6.25,6.26" fill="#6b6b6b"/></svg><div class="t" style="left:337px;top:668.50px;font-size:13px;line-height:16px;font-weight:bold;color:#1a1a1a">England (V)</div><div class="t" style="left:337px;top:696.50px;font-size:13px;line-height:16px;font-weight:bold;color:#1a1a1a">Germany (V)</div><div class="t" style="left:337px;top:724.67px;font-size:12.5px;line-height:16px;color:#444">Draw</div><div class="ob" style="left:654px;top:664px;width:99px"><div class="h">0</div><div class="o">0.93</div></div><div class="ob" style="left:759px;top:664px;width:102px"><div class="h">4.0</div><div class="o">0.90</div></div><div class="ob" style="left:867px;top:664px;width:66px"><div class="c">2.34</div></div><div class="ob" style="left:654px;top:694px;width:99px"><div class="o">0.79</div></div><div class="ob" style="left:759px;top:694px;width:102px"><div class="u">u</div><div class="o">0.82</div></div><div class="ob" style="left:867px;top:694px;width:66px"><div class="c">2.18</div></div><div class="ob" style="left:867px;top:724px;width:66px"><div class="c">3.80</div></div><div class="ob" style="left:654px;top:761px;width:99px"><div class="o">0.66</div></div><div class="ob" style="left:759px;top:761px;width:102px"><div class="h">3.5/4</div><div class="o">0.72</div></div><div class="ob" style="left:654px;top:791px;width:99px"><div class="h">0/0.5</div><div class="o n">-0.94</div></div><div class="ob" style="left:759px;top:791px;width:102px"><div class="u">u</div><div class="o">1.00</div></div><div class="ob" style="left:946px;top:664px;width:97px"><div class="h">0</div><div class="o">0.93</div></div><div class="ob" style="left:1050px;top:664px;width:102px"><div class="h">2.0</div><div class="o">0.77</div></div><div class="ob" style="left:1158px;top:664px;width:65px"><div class="c">2.63</div></div><div class="ob" style="left:946px;top:694px;width:97px"><div class="o">0.79</div></div><div class="ob" style="left:1050px;top:694px;width:102px"><div class="u">u</div><div class="o">0.95</div></div><div class="ob" style="left:1158px;top:694px;width:65px"><div class="c">2.45</div></div><div class="ob" style="left:1158px;top:724px;width:65px"><div class="c">2.76</div></div><div class="ob" style="left:946px;top:761px;width:97px"><div class="o">0.56</div></div><div class="ob" style="left:1050px;top:761px;width:102px"><div class="h">2/2.5</div><div class="o n">-0.94</div></div><div class="ob" style="left:946px;top:791px;width:97px"><div class="h">0/0.5</div><div class="o n">-0.84</div></div><div class="ob" style="left:1050px;top:791px;width:102px"><div class="u">u</div><div class="o">0.66</div></div><div class="fb" style="left:337px;top:828px"><svg style="left:3px;top:2px" width="15" height="15" viewBox="0 0 15 15"><polygon points="7.50,0.75 9.48,5.52 14.63,5.93 10.71,9.29 11.91,14.32 7.50,11.62 3.09,14.32 4.29,9.29 0.37,5.93 5.52,5.52" fill="#3a7cb8"/></svg></div><div class="fb" style="left:365px;top:828px"><svg style="left:6px;top:5px" width="10" height="11" viewBox="0 0 10 11"><polygon points="0.5,0 9.5,5.5 0.5,11" fill="#9b0d0d"/></svg></div><div class="fb" style="left:393px;top:828px"><svg style="left:3px;top:4px" width="14" height="12" viewBox="0 0 14 12"><rect x="1.5" y="1" width="11" height="4.5" rx="2.2" fill="none" stroke="#6b8fc9" stroke-width="1.2"/><rect x="1.5" y="6" width="11" height="4.5" rx="2.2" fill="none" stroke="#6b8fc9" stroke-width="1.2"/></svg></div><div class="fb" style="left:1139px;top:828px;width:49px"><div class="t" style="left:5px;top:2px;font-size:14px;color:#3f84bf">39</div><svg style="left:29px;top:8px" width="11" height="6" viewBox="0 0 11 6"><path d="M1 1 L5.5 5 L10 1" fill="none" stroke="#3f84bf" stroke-width="1.3"/></svg></div><div class="fb" style="left:1196px;top:828px;width:26px"><svg style="left:10px;top:5px" width="6" height="10" viewBox="0 0 6 10"><path d="M1 1 L5 5.0 L1 9" fill="none" stroke="#5a7fb5" stroke-width="1.3"/></svg></div>
<div style="left:245px;top:856px;width:984px;height:8px;background:#f9dac4"></div>
<div style="left:330px;top:856px;width:1px;height:8px;background:#ead2c2"></div>
<div style="left:647px;top:856px;width:1px;height:8px;background:#ead2c2"></div>
<div style="left:939px;top:856px;width:1px;height:8px;background:#ead2c2"></div>
<div style="left:245px;top:856px;width:984px;height:1px;background:#f1c9ad"></div>
<div style="left:654px;top:863px;width:99px;height:1px;background:#fff6f1;border-radius:3px 3px 0 0"></div>
<div style="left:759px;top:863px;width:102px;height:1px;background:#fff6f1;border-radius:3px 3px 0 0"></div>
<div style="left:867px;top:863px;width:66px;height:1px;background:#fff6f1;border-radius:3px 3px 0 0"></div>
<div style="left:946px;top:863px;width:97px;height:1px;background:#fff6f1;border-radius:3px 3px 0 0"></div>
<div style="left:1050px;top:863px;width:102px;height:1px;background:#fff6f1;border-radius:3px 3px 0 0"></div>
<div style="left:1158px;top:863px;width:65px;height:1px;background:#fff6f1;border-radius:3px 3px 0 0"></div>
<div style="left:1238px;top:47px;width:226px;height:129px;background:#fff;border-radius:4px;box-shadow:0 1px 1px rgba(0,0,0,.1)"></div>
<div style="left:1242px;top:51px;width:218px;height:54px;border-radius:4px;overflow:hidden;background:linear-gradient(90deg,#1a2078 0%,#1e2790 40%,#2634a8 70%,#1c2486 100%)"><div style="left:0;top:2px;width:218px;height:3px;background:rgba(160,175,255,.30)"></div><div style="left:10px;top:12px;width:2px;height:40px;background:rgba(140,160,255,.35)"></div><div style="left:20px;top:12px;width:30px;height:4px;border-radius:2px;background:rgba(200,210,255,.35)"></div><div style="left:150px;top:8px;width:36px;height:36px;border-radius:50%;background:rgba(120,130,220,.25)"></div><div style="left:48px;top:26px;width:17px;height:22px;border-radius:6px;background:#c4dbf6;transform:rotate(25deg)"></div><div style="left:40px;top:40px;width:8px;height:12px;border-radius:3px;background:#b8d0ef;transform:rotate(30deg)"></div><div style="left:54px;top:12px;width:17px;height:17px;border-radius:50%;background:#e6f0fc"></div><div style="left:58px;top:16px;width:10px;height:9px;border-radius:50%;background:#2a3070"></div><svg style="left:69px;top:10px" width="20" height="20" viewBox="0 0 20 20"><polygon points="10.00,1.00 12.65,7.36 19.51,7.91 14.28,12.39 15.88,19.09 10.00,15.50 4.12,19.09 5.72,12.39 0.49,7.91 7.35,7.36" fill="#f6e24c"/></svg><div class="t" style="left:90px;top:9px;font-size:17px;line-height:18px;font-weight:bold;font-style:italic;color:#eef4ff;transform:scaleX(0.66);transform-origin:0 0">THE NEW</div><div class="t" style="left:89px;top:27px;font-size:17px;line-height:19px;font-weight:bold;font-style:italic;color:#e8f6ff;transform:scaleX(0.78);transform-origin:0 0">GALAXY VERSION!</div><div style="left:198px;top:2px;width:16px;height:16px;border-radius:50%;background:#dfe6f2"></div></div>
<div style="left:1242px;top:111px;width:218px;height:53px;border-radius:4px;overflow:hidden;background:#4a8bc6"><div style="left:18px;top:-6px;width:70px;height:58px;background:rgba(255,255,255,.13);transform:rotate(-22deg)"></div><div style="left:125px;top:0px;width:95px;height:60px;background:rgba(255,255,255,.10);border-radius:50px 50px 0 0"></div><div style="left:40px;top:6px;width:13px;height:13px;border-radius:50%;background:rgba(255,255,255,.25)"></div><div style="left:14px;top:24px;width:12px;height:6px;border-radius:3px;background:#f07050;transform:rotate(20deg)"></div><div style="left:68px;top:8px;width:21px;height:21px;border-radius:50%;background:#f2f2f2"></div><div style="left:74px;top:14px;width:9px;height:9px;border-radius:50%;background:#222"></div><div style="left:71px;top:9px;width:5px;height:5px;border-radius:50%;background:#333"></div><div style="left:83px;top:21px;width:5px;height:5px;border-radius:50%;background:#333"></div><div style="left:36px;top:35px;width:34px;height:8px;background:#f4f4f4;transform:rotate(9deg);border-radius:2px"></div><div style="left:32px;top:30px;width:5px;height:8px;background:#1a1a1a;transform:rotate(-20deg)"></div><div style="left:68px;top:40px;width:6px;height:10px;background:#b81c1c"></div><div style="left:73px;top:41px;width:32px;height:9px;background:#e8a86a;transform:rotate(3deg)"></div><div style="left:100px;top:36px;width:36px;height:17px;background:#d82020;border-radius:6px 4px 0 0"></div><div style="left:116px;top:11px;width:30px;height:36px;background:#e22828;border-radius:10px 12px 6px 6px;transform:rotate(24deg)"></div><div style="left:119px;top:1px;width:15px;height:11px;border-radius:50% 50% 30% 30%;background:#1e1e1e"></div><div style="left:122px;top:8px;width:11px;height:10px;border-radius:50%;background:#e4a06a"></div><div style="left:158px;top:24px;width:8px;height:30px;background:#e8a86a;transform:rotate(-30deg);border-radius:3px"></div><div style="left:182px;top:4px;width:7px;height:26px;background:#f2b636;border-radius:4px;transform:rotate(12deg)"></div></div>
<div style="left:1339px;top:166px;width:8px;height:8px;border-radius:50%;background:#d5d5d5"></div>
<div style="left:1355px;top:166px;width:8px;height:8px;border-radius:50%;background:#3a7cb8"></div></body></html>
